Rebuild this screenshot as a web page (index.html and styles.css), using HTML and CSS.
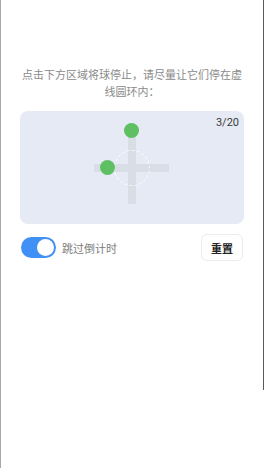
FILE: index.html
```html
<!DOCTYPE html>
<html>
<head>
<meta charset="utf-8">
<link rel="stylesheet" href="styles.css">
</head>
<body>
<div class="page">
  <p class="hint">点击下方区域将球停止，请尽量让它们停在虚线圆环内：</p>
  <div class="board">
    <span class="count">3/20</span>
    <div class="bar-h"></div>
    <div class="bar-v"></div>
    <div class="ring"></div>
    <div class="ball ball-top"></div>
    <div class="ball ball-left"></div>
  </div>
  <div class="controls">
    <label class="switch-row">
      <span class="switch"><span class="knob"></span></span>
      <span class="switch-label">跳过倒计时</span>
    </label>
    <button class="reset">重置</button>
  </div>
</div>
</body>
</html>
```
FILE: styles.css
```css
html, body {
  margin: 0;
  padding: 0;
  background: #fff;
}
body {
  width: 264px;
  height: 468px;
  overflow: hidden;
  position: relative;
  font-family: "Noto Sans CJK SC", "Noto Sans", sans-serif;
}
body::after {
  content: "";
  position: absolute;
  right: 0;
  top: 0;
  width: 1px;
  height: 390px;
  background: #5a5a5a;
}
.page {
  box-sizing: border-box;
  width: 264px;
  height: 468px;
  border-left: 1px solid #a8a8a8;
  padding: 66px 20px 0 19px;
}
.hint {
  margin: 0;
  font-size: 11px;
  line-height: 17px;
  color: #8a8a8a;
  text-align: center;
}
.board {
  position: relative;
  margin-top: 11px;
  height: 113px;
  border-radius: 8px;
  background: #e5eaf4;
}
.count {
  position: absolute;
  top: 5px;
  right: 5px;
  font-family: "Roboto", "Liberation Sans", sans-serif;
  font-size: 11px;
  line-height: 14px;
  color: #3a3a3a;
}
.bar-h {
  position: absolute;
  left: 74px;
  top: 53px;
  width: 75px;
  height: 8px;
  background: #d9dde6;
}
.bar-v {
  position: absolute;
  left: 108px;
  top: 25px;
  width: 8px;
  height: 68px;
  background: #d9dde6;
}
.ring {
  position: absolute;
  left: 94px;
  top: 39px;
  width: 34px;
  height: 34px;
  border: 1px dashed rgba(255, 255, 255, 0.8);
  border-radius: 50%;
}
.ball {
  position: absolute;
  width: 15px;
  height: 15px;
  border-radius: 50%;
  background: #5fbf63;
}
.ball-top {
  left: 104px;
  top: 12px;
}
.ball-left {
  left: 80px;
  top: 49px;
}
.controls {
  display: flex;
  align-items: center;
  justify-content: space-between;
  margin-top: 10px;
  padding-left: 1px;
  padding-right: 1px;
}
.switch-row {
  display: flex;
  align-items: center;
  gap: 6px;
}
.switch {
  box-sizing: border-box;
  width: 35px;
  height: 21px;
  border-radius: 11px;
  background: #4190f6;
  padding: 2px;
  display: flex;
  justify-content: flex-end;
}
.knob {
  width: 17px;
  height: 17px;
  border-radius: 50%;
  background: #fff;
}
.switch-label {
  font-size: 11px;
  color: #7d7d7d;
}
.reset {
  box-sizing: border-box;
  width: 42px;
  height: 27px;
  border: 1px solid #ececec;
  border-radius: 6px;
  background: #fff;
  font-family: "Noto Sans CJK SC", sans-serif;
  font-size: 11px;
  font-weight: 700;
  color: #222;
  padding: 0;
}
```
